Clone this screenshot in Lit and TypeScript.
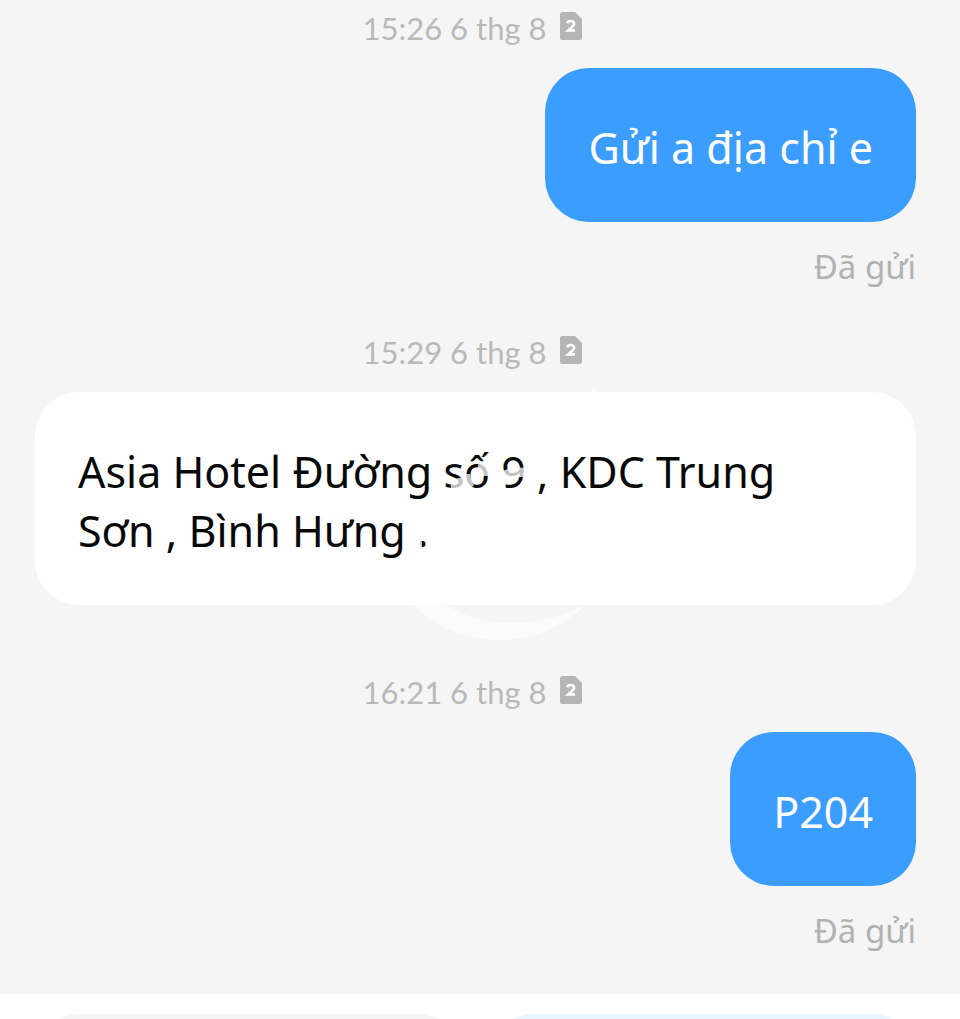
import {LitElement, html, css} from 'lit';
import {customElement, property} from 'lit/decorators.js';

interface Message {
  time: string;
  text: string;
  mine: boolean;
}

const messages: Message[] = [
  {time: '15:26 6 thg 8', text: 'Gửi a địa chỉ e', mine: true},
  {
    time: '15:29 6 thg 8',
    text: 'Asia Hotel Đường số 9 , KDC Trung Sơn , Bình Hưng .',
    mine: false,
  },
  {time: '16:21 6 thg 8', text: 'P204', mine: true},
];

@customElement('chat-message')
export class ChatMessage extends LitElement {
  static styles = css`
    :host {
      display: flex;
      flex-direction: column;
    }
    .stamp {
      display: flex;
      justify-content: center;
      align-items: center;
      gap: 14px;
      height: 40px;
      padding-right: 6px;
      margin-bottom: 20px;
      color: #b9b9b9;
      font-family: Lato, "Noto Sans", sans-serif;
      font-size: 31px;
      line-height: 40px;
    }
    .sim {
      width: 22px;
      height: 28px;
      margin-bottom: 4px;
    }
    .bubble {
      margin: 0;
      padding: 50px 43px 45px;
      border-radius: 44px;
      font-size: 43px;
      line-height: 59px;
    }
    .mine {
      align-self: flex-end;
      background: #3b9dff;
      color: #fff;
    }
    .theirs {
      padding-right: 100px;
      margin-bottom: 22px;
      background: #fff;
      color: #080808;
    }
    .status {
      align-self: flex-end;
      margin-top: 25px;
      color: #b2b2b2;
      font-size: 33px;
      line-height: 40px;
    }
  `;

  @property() time = '';
  @property() text = '';
  @property({type: Boolean}) mine = false;

  render() {
    return html`
      <div class="stamp">
        <time>${this.time}</time>
        <svg class="sim" viewBox="0 0 22 28" role="img" aria-label="SIM 2">
          <path fill="#b5b5b5" d="M2.500 0H15l7 7v18.500a2.500 2.500 0 0 1-2.500 2.500h-17A2.500 2.500 0 0 1 0 25.500v-23A2.500 2.500 0 0 1 2.500 0z"/>
          <path fill="none" stroke="#fff" stroke-width="2.600" d="M7.200 11.400c.4-1.800 1.800-2.400 3.400-2.400 2 0 3.500 1 3.500 2.700 0 2.300-2.900 4-6 6.700h6.900"/>
        </svg>
      </div>
      <p class="bubble ${this.mine ? 'mine' : 'theirs'}">${this.text}</p>
      ${this.mine ? html`<div class="status">Đã gửi</div>` : ''}
    `;
  }
}

@customElement('app-root')
export class AppRoot extends LitElement {
  static styles = css`
    :host {
      display: flex;
      flex-direction: column;
      box-sizing: border-box;
      height: 100vh;
      overflow: hidden;
      background: #f5f5f5;
      font-family: "Noto Sans", sans-serif;
    }
    .thread {
      position: relative;
      display: flex;
      flex-direction: column;
      gap: 45px;
      padding: 8px 44px 43px 35px;
    }
    /* faint watermark stamped over the conversation */
    .mark {
      position: absolute;
      left: 380px;
      top: 384px;
      width: 240px;
      height: 260px;
      pointer-events: none;
    }
    .replies {
      flex: 1;
      display: grid;
      grid-template-columns: 1fr 1fr;
      gap: 28px;
      padding: 20px 44px 0 35px;
      background: #fff;
    }
    .reply {
      height: 100px;
      border: 0;
      border-radius: 44px;
      background: #f5f5f5;
    }
    .accent {
      background: #eaf4ff;
    }
  `;

  render() {
    return html`
      <main class="thread">
        ${messages.map(
          (m) => html`
            <chat-message .time=${m.time} .text=${m.text} .mine=${m.mine}></chat-message>
          `
        )}
        <svg class="mark" viewBox="0 0 240 260" aria-hidden="true">
          <path fill="#fbfbfb" d="M34 221C75 267 160 268 205 221C160 245 105 245 66 221z"/>
          <path fill="#fff" d="M212 8L216 0L214 8z"/>
          <g fill="none" stroke="#fff" stroke-opacity="0.75" stroke-width="6">
            <path d="M71 104Q81 103 79 94"/>
            <path d="M98 82Q106 84 106 92"/>
            <path d="M87 90Q87 98 92 103"/>
            <path d="M125 86Q127 92 133 91Q140 91 142 84V93"/>
            <path d="M157 97L167 97"/>
            <path d="M40 158L40 166" stroke-width="4"/>
          </g>
        </svg>
      </main>
      <footer class="replies">
        <button class="reply" aria-label="SIM 1"></button>
        <button class="reply accent" aria-label="SIM 2"></button>
      </footer>
    `;
  }
}
